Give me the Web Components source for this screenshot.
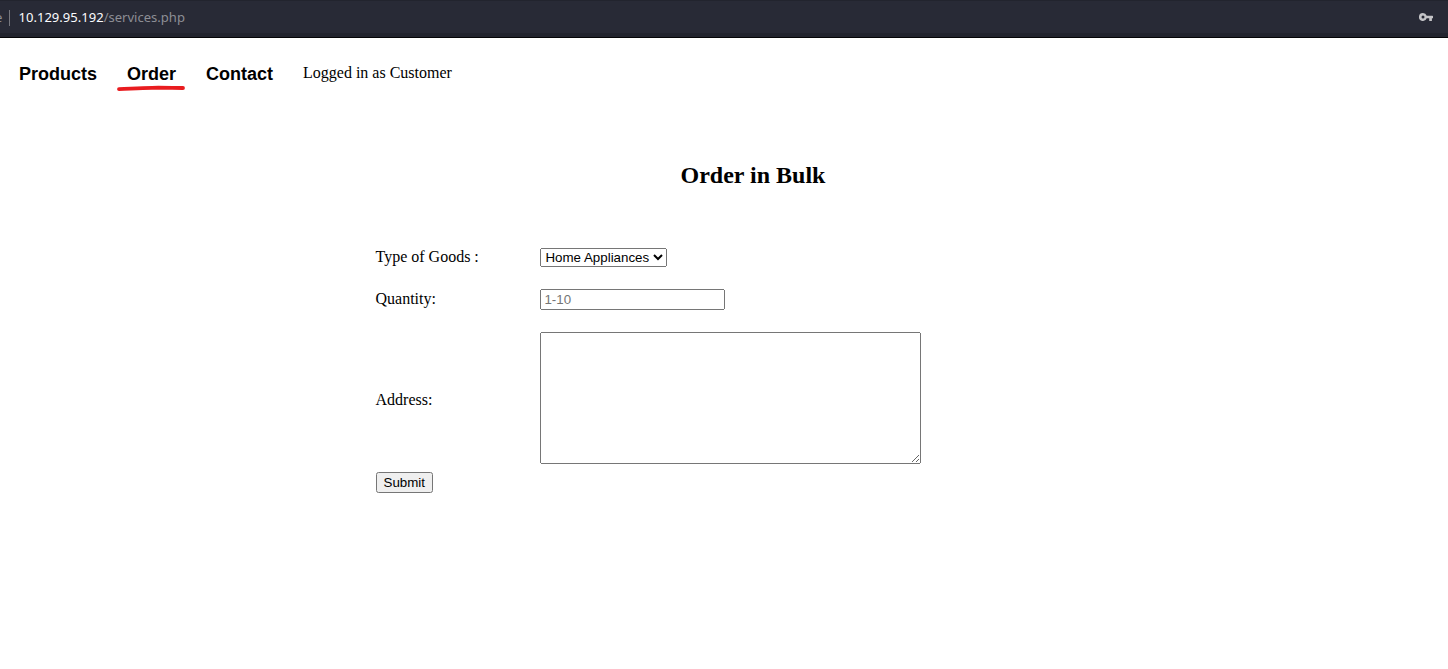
<!DOCTYPE html>
<html lang="en"><head><meta charset="utf-8"><title>Order in Bulk</title>
<style>html,body{margin:0;background:#fff;height:100%;overflow:hidden}body{font:16px "Liberation Serif",serif;color:#000}</style>
</head><body>
<order-page></order-page>
<script>
const define = (name, html) => {
  const t = document.createElement('template');
  t.innerHTML = html;
  customElements.define(name, class extends HTMLElement {
    constructor() {
      super();
      this.attachShadow({ mode: 'open' }).append(t.content.cloneNode(true));
    }
  });
};

define('address-bar', `<style>
:host{display:flex;align-items:center;box-sizing:border-box;height:38px;padding:0 15px 3px 0;background:linear-gradient(#22242e 0 1px,#282a36 1px 33px,#22242e 33px 37px,#050507 37px);font:13.05px/18px "Noto Sans",sans-serif;color:#8d8e95;white-space:pre}
.tail{width:9px;display:flex;justify-content:flex-start;overflow:hidden}
.tail span{margin-left:-5px}
.rule{width:1px;height:16px;background:#77787f;margin-right:8.5px}
.url,.tail{padding-bottom:2px}
b{font-weight:400;color:#fbfbfe}
svg{margin-left:auto;display:block}
</style><div class="tail"><span>e</span></div><div class="rule"></div><div class="url"><b><slot name="host"></slot></b><slot></slot></div>
<svg width="14" height="9" viewBox="0 0 14 9" fill="#c4c4c7"><path fill-rule="evenodd" d="M4 0a4 4 0 0 1 3.7 2.7H13.4a.6.6 0 0 1 .6.6V5.3H12.9V8H10.2V5.3H7.7A4 4 0 1 1 4 0ZM4 2.6a1.5 1.5 0 1 0 0 3a1.5 1.5 0 0 0 0-3Z"/></svg>`);

define('nav-link', `<style>
:host{display:block;position:relative;font:bold 18px/21px "Liberation Sans",sans-serif}
::slotted(svg){position:absolute;left:-11px;top:21px}
</style><slot></slot>`);

define('site-nav', `<style>
:host{display:flex;gap:30px;padding:26px 19px 0;height:21px}
::slotted(span){line-height:18px}
</style><slot></slot>`);

define('form-row', `<style>
:host{display:grid;grid-template-columns:164.95px auto;align-items:center;justify-content:start}
.label{line-height:18px;padding-bottom:2px}
:host([compact]) .label{padding-bottom:1px}
:host([tall]) .label{padding:4px 0 0}
</style><div class="label"><slot name="label"></slot></div><slot></slot>`);

define('order-form', `<style>
:host{display:block;margin:59px 0 0 375.5px}
form{display:flex;flex-direction:column;align-items:flex-start}
form-row{height:19px}
form-row+form-row{margin-top:22px;height:21px}
form-row+form-row[tall]{height:132px}
select,input,textarea,button{font:13.333px "Liberation Sans",Arial,sans-serif;margin:0;box-sizing:border-box}
select{width:127px;height:19px}
input{width:185px;height:21px}
textarea{width:381px;height:132px;font-family:"Liberation Mono",monospace;display:block}
button{width:57.5px;height:21px;margin-top:8px;padding:1px 6px}
</style><form>
<form-row compact><span slot="label">Type of Goods :</span><select><option>Home Appliances</option></select></form-row>
<form-row><span slot="label">Quantity:</span><input placeholder="1-10"></form-row>
<form-row tall><span slot="label">Address:</span><textarea></textarea></form-row>
<button type="button">Submit</button></form>`);

define('order-page', `<style>
:host{display:block}
h2{font-size:24px;line-height:27px;margin:77px 0 0 58px;text-align:center}
</style>
<address-bar><span slot="host">10.129.95.192</span>/services.php</address-bar>
<site-nav><nav-link>Products</nav-link><nav-link>Order<svg width="72" height="8" viewBox="0 0 72 8" fill="none"><path d="M3 4.2C15 3.7 24 3 36 2.8S58 3 67 3" stroke="#e91c1f" stroke-width="3.8" stroke-linecap="round"/></svg></nav-link><nav-link>Contact</nav-link><span>Logged in as Customer</span></site-nav>
<h2>Order in Bulk</h2>
<order-form></order-form>`);
</script></body></html>
